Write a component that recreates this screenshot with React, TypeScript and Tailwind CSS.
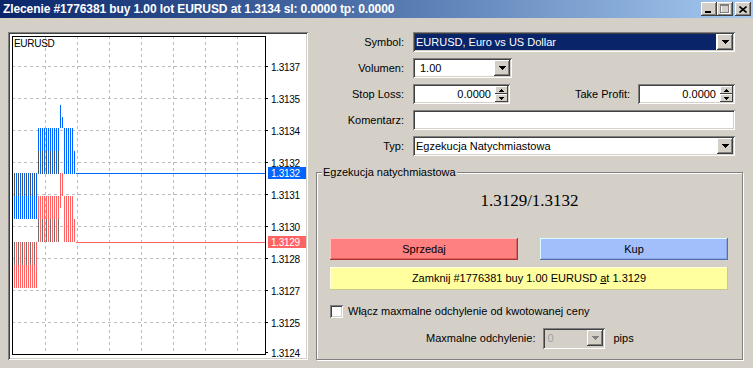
import React from "react";

// classic 3D borders
const raised =
	"shadow-[inset_-1px_-1px_#404040,inset_1px_1px_#ffffff,inset_-2px_-2px_#808080,inset_2px_2px_#d4d0c8]";
const sunken =
	"shadow-[inset_1px_1px_#808080,inset_-1px_-1px_#ffffff,inset_2px_2px_#404040,inset_-2px_-2px_#d4d0c8]";
const thinRaised = "shadow-[inset_-1px_-1px_#404040,inset_1px_1px_#ffffff]";

const Arrow: React.FC<{ color?: string }> = ({ color = "#000" }) => (
	<svg width="7" height="4" shapeRendering="crispEdges">
		<rect x="0" y="0" width="7" height="1" fill={color} />
		<rect x="1" y="1" width="5" height="1" fill={color} />
		<rect x="2" y="2" width="3" height="1" fill={color} />
		<rect x="3" y="3" width="1" height="1" fill={color} />
	</svg>
);

const DropButton: React.FC<{ disabled?: boolean }> = ({ disabled }) => (
	<div
		className={`w-[16px] h-[16px] shrink-0 bg-[#d4d0c8] flex items-center justify-center ${raised}`}
	>
		<Arrow color={disabled ? "#808080" : "#000"} />
	</div>
);

const Spin: React.FC = () => (
	<div className="flex flex-col w-[13px] h-[16px] shrink-0">
		<div className={`h-[8px] bg-[#d4d0c8] flex items-center justify-center ${thinRaised}`}>
			<svg width="5" height="3" shapeRendering="crispEdges">
				<rect x="2" y="0" width="1" height="1" />
				<rect x="1" y="1" width="3" height="1" />
				<rect x="0" y="2" width="5" height="1" />
			</svg>
		</div>
		<div className={`h-[8px] bg-[#d4d0c8] flex items-center justify-center ${thinRaised}`}>
			<svg width="5" height="3" shapeRendering="crispEdges">
				<rect x="0" y="0" width="5" height="1" />
				<rect x="1" y="1" width="3" height="1" />
				<rect x="2" y="2" width="1" height="1" />
			</svg>
		</div>
	</div>
);

const Chart: React.FC = () => {
	const hLines = [66, 98, 130, 162, 194, 226, 258, 290, 322];
	const vLines = [45, 77, 109, 141, 173, 205, 237];
	const labels: [number, string][] = [
		[66, "1.3137"],
		[98, "1.3135"],
		[130, "1.3134"],
		[162, "1.3132"],
		[194, "1.3131"],
		[226, "1.3130"],
		[258, "1.3128"],
		[290, "1.3127"],
		[322, "1.3125"],
		[352, "1.3124"],
	];
	// [x, y, w, h, fill]
	const bars: [number, number, number, number, string][] = [
		[12, 173, 25, 23, "bd"],
		[12, 196, 25, 23, "bl"],
		[37, 128, 23, 23, "bl"],
		[37, 151, 23, 23, "bd"],
		[60, 105, 2, 23, "bl"],
		[62, 117, 2, 11, "bl"],
		[63, 128, 11, 23, "bl"],
		[63, 151, 13, 23, "bl"],
		[60, 173, 3, 23, "rl"],
		[60, 196, 2, 12, "rl"],
		[37, 196, 23, 23, "rl"],
		[37, 219, 23, 23, "rd"],
		[63, 196, 11, 23, "rl"],
		[63, 219, 13, 23, "rl"],
		[12, 242, 25, 23, "rd"],
		[12, 265, 25, 23, "rl"],
	];
	const txt = {
		dominantBaseline: "central" as const,
		fontSize: 10,
		letterSpacing: -0.3,
		fontFamily: "'Liberation Sans', Arial, sans-serif",
	};
	return (
		<svg width={296} height={324} viewBox="10 34 296 324" shapeRendering="crispEdges">
			<defs>
				<pattern id="dh" width="6" height="1" patternUnits="userSpaceOnUse">
					<rect width="3" height="1" fill="#bcbcbc" />
				</pattern>
				<pattern id="dv" width="1" height="6" patternUnits="userSpaceOnUse">
					<rect width="1" height="3" fill="#bcbcbc" />
				</pattern>
				<pattern id="bl" width="2" height="1" patternUnits="userSpaceOnUse">
					<rect width="1" height="1" fill="#0066ff" />
				</pattern>
				<pattern id="bd" width="4" height="1" patternUnits="userSpaceOnUse">
					<rect width="1" height="1" fill="#0066ff" />
					<rect x="2" width="1" height="1" fill="#505050" />
				</pattern>
				<pattern id="rl" width="2" height="1" patternUnits="userSpaceOnUse">
					<rect width="1" height="1" fill="#ff6464" />
				</pattern>
				<pattern id="rd" width="4" height="1" patternUnits="userSpaceOnUse">
					<rect width="1" height="1" fill="#ff6464" />
					<rect x="2" width="1" height="1" fill="#707070" />
				</pattern>
			</defs>
			{hLines.map((y) => (
				<rect key={"h" + y} x={13} y={y} width={252} height={1} fill="url(#dh)" />
			))}
			{vLines.map((x) => (
				<rect key={"v" + x} x={x} y={37} width={1} height={317} fill="url(#dv)" />
			))}
			{bars.map(([x, y, w, h, f], i) => (
				<rect key={i} x={x} y={y} width={w} height={h} fill={`url(#${f})`} />
			))}
			<rect x={76} y={173} width={190} height={1} fill="#0066ff" />
			<rect x={76} y={242} width={190} height={1} fill="#ff6464" />
			<rect x={12.5} y={36.5} width={253} height={318} fill="none" stroke="#000" />
			{labels.map(([y, t]) => (
				<g key={"l" + y + t}>
					<rect x={265} y={y} width={3} height={1} fill="#000" />
					<text x={271} y={y + 1} fill="#000" {...txt}>
						{t}
					</text>
				</g>
			))}
			<rect x={268} y={167} width={38} height={12} fill="#0066ff" />
			<text x={271} y={173.5} fill="#fff" {...txt}>
				1.3132
			</text>
			<rect x={268} y={236} width={38} height={12} fill="#ff6464" />
			<text x={271} y={242.5} fill="#fff" {...txt}>
				1.3129
			</text>
			<text x={14} y={43} fill="#000" {...txt}>
				EURUSD
			</text>
		</svg>
	);
};

const TitleBar: React.FC = () => (
	<div className="h-[18px] flex items-center bg-linear-to-r from-[#0a246a] to-[#a6caf0]">
		<div className="pl-[3px] text-white font-bold text-[12px] tracking-[-0.1px] leading-[18px] whitespace-nowrap flex-1">
			Zlecenie #1776381 buy 1.00 lot EURUSD at 1.3134 sl: 0.0000 tp: 0.0000
		</div>
		<div className="flex items-center pr-[2px]">
			<div className={`w-[16px] h-[14px] bg-[#d4d0c8] relative ${raised}`}>
				<div className="absolute left-[4px] top-[9px] w-[6px] h-[2px] bg-black" />
			</div>
			<div className={`w-[16px] h-[14px] bg-[#d4d0c8] flex items-center justify-center ${raised}`}>
				<svg width="10" height="10" shapeRendering="crispEdges">
					<rect x="1.5" y="1.5" width="8" height="8" fill="none" stroke="#ffffff" />
					<rect x="0.5" y="0.5" width="8" height="8" fill="none" stroke="#808080" />
					<rect x="1" y="1" width="7" height="1" fill="#808080" />
				</svg>
			</div>
			<div className={`ml-[2px] w-[16px] h-[14px] bg-[#d4d0c8] flex items-center justify-center ${raised}`}>
				<svg width="8" height="7">
					<path d="M0.5 0.5L7.5 6.5M7.5 0.5L0.5 6.5" stroke="#000" strokeWidth="1.6" />
				</svg>
			</div>
		</div>
	</div>
);

const Label: React.FC<{ children: React.ReactNode; w?: string }> = ({ children, w = "w-[96px]" }) => (
	<div className={`${w} shrink-0 text-right whitespace-nowrap`}>{children}</div>
);

export default function App() {
	return (
		<div className="w-[753px] h-[368px] bg-[#d4d0c8] overflow-hidden text-[11px] leading-[13px] text-black font-['Liberation_Sans',Arial,sans-serif]">
			<TitleBar />
			<div className="flex pt-[14px] pl-[8px]">
				<div className={`w-[300px] h-[328px] p-[2px] bg-white shrink-0 ${sunken}`}>
					<Chart />
				</div>
				<div className="flex-1 flex flex-col">
					<div className="flex flex-col gap-[6px]">
						<div className="flex items-center h-[20px]">
							<Label>Symbol:</Label>
							<div className={`ml-[9px] w-[322px] h-[20px] bg-white p-[2px] flex items-stretch ${sunken}`}>
								<div className="flex-1 bg-[#0a246a] text-white pl-[1px] flex items-center mr-[1px]">
									EURUSD, Euro vs US Dollar
								</div>
								<DropButton />
							</div>
						</div>
						<div className="flex items-center h-[20px]">
							<Label>Volumen:</Label>
							<div className={`ml-[9px] w-[99px] h-[20px] bg-white p-[2px] flex items-stretch ${sunken}`}>
								<div className="flex-1 pl-[5px] flex items-center">1.00</div>
								<DropButton />
							</div>
						</div>
						<div className="flex items-center h-[20px]">
							<Label>Stop Loss:</Label>
							<div className={`ml-[9px] w-[97px] h-[20px] bg-white p-[2px] flex items-stretch ${sunken}`}>
								<div className="flex-1 pr-[4px] flex items-center justify-end">0.0000</div>
								<Spin />
							</div>
							<Label w="w-[120px]">Take Profit:</Label>
							<div className={`ml-[8px] w-[97px] h-[20px] bg-white p-[2px] flex items-stretch ${sunken}`}>
								<div className="flex-1 pr-[4px] flex items-center justify-end">0.0000</div>
								<Spin />
							</div>
						</div>
						<div className="flex items-center h-[20px]">
							<Label>Komentarz:</Label>
							<div className={`ml-[9px] w-[322px] h-[20px] bg-white ${sunken}`} />
						</div>
						<div className="flex items-center h-[20px]">
							<Label>Typ:</Label>
							<div className={`ml-[9px] w-[322px] h-[20px] bg-white p-[2px] flex items-stretch ${sunken}`}>
								<div className="flex-1 pl-[1px] flex items-center">Egzekucja Natychmiastowa</div>
								<DropButton />
							</div>
						</div>
					</div>
					<fieldset className="mt-[10px] ml-[8px] w-[427px] border border-[#808080] shadow-[inset_1px_1px_#ffffff,1px_1px_#ffffff]">
						<legend className="ml-[5px] px-[1px] bg-[#d4d0c8] leading-[13px]">Egzekucja natychmiastowa</legend>
						<div className="px-[13px] pb-[10px]">
							<div className="mt-[12px] h-[20px] leading-[20px] text-center text-[17px] font-['Liberation_Serif','Times_New_Roman',serif]">
								1.3129/1.3132
							</div>
							<div className="mt-[27px] flex gap-[22px]">
								<div className="w-[188px] h-[22px] bg-[#ff8080] flex items-center justify-center shadow-[inset_-1px_-1px_#b03030,inset_1px_1px_#ffc0c0,inset_-2px_-2px_#e06060]">
									Sprzedaj
								</div>
								<div className="w-[188px] h-[22px] bg-[#a2bffc] flex items-center justify-center shadow-[inset_-1px_-1px_#5070b0,inset_1px_1px_#d8ffff,inset_-2px_-2px_#8aa8e8]">
									Kup
								</div>
							</div>
							<div className="mt-[7px] w-[398px] h-[23px] bg-[#ffffa0] flex items-center justify-center shadow-[inset_-1px_-1px_#c8c890,inset_1px_1px_#ffffe0]">
								<span>
									Zamknij #1776381 buy 1.00 EURUSD <span className="underline">a</span>t 1.3129
								</span>
							</div>
							<div className="mt-[15px] h-[13px] flex items-center">
								<div className={`w-[13px] h-[13px] bg-white shrink-0 ${sunken}`} />
								<div className="ml-[5px] whitespace-nowrap">Włącz maxmalne odchylenie od kwotowanej ceny</div>
							</div>
							<div className="mt-[10px] h-[21px] flex items-center ml-[96px]">
								<div className="whitespace-nowrap">Maxmalne odchylenie:</div>
								<div className={`ml-[8px] w-[62px] h-[21px] bg-[#d4d0c8] p-[2px] flex items-stretch ${sunken}`}>
									<div className="flex-1 pl-[2px] flex items-center text-[#a0a0a0]">0</div>
									<DropButton disabled />
								</div>
								<div className="ml-[8px]">pips</div>
							</div>
						</div>
					</fieldset>
				</div>
			</div>
		</div>
	);
}
